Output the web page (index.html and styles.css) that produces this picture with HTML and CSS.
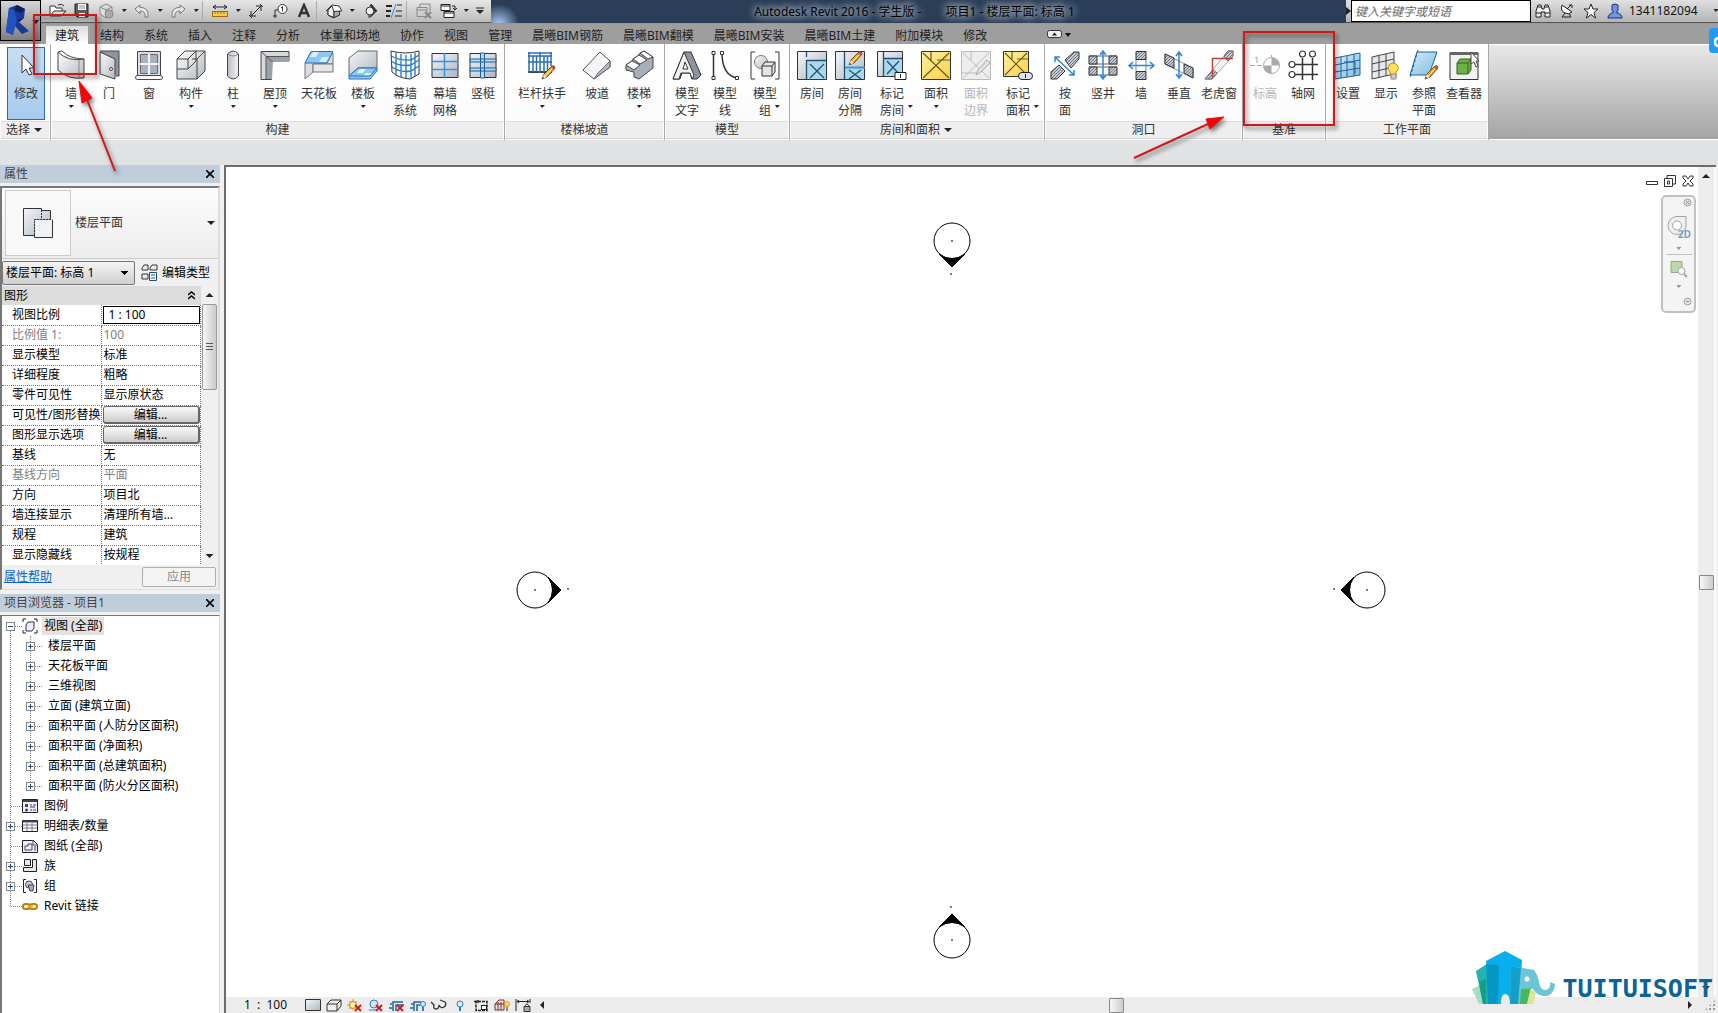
FILE: index.html
```html
<!DOCTYPE html>
<html lang="zh-CN">
<head>
<meta charset="utf-8">
<meta name="viewport" content="width=device-width, initial-scale=1">
<title>Autodesk Revit 2016 - 学生版</title>
<link rel="stylesheet" href="styles.css">
</head>
<body>
<svg class="defs" width="0" height="0" aria-hidden="true">
  <defs>
    <linearGradient id="grey" x1="0" y1="0" x2="1" y2="1"><stop offset="0" stop-color="#fff"/><stop offset="1" stop-color="#b4b8be"/></linearGradient>
    <linearGradient id="dark" x1="0" y1="0" x2="1" y2="0"><stop offset="0" stop-color="#b9bdc4"/><stop offset="1" stop-color="#f2f3f5"/></linearGradient>
    <linearGradient id="slate" x1="0" y1="0" x2="1" y2="1"><stop offset="0" stop-color="#f4f6f9"/><stop offset="1" stop-color="#aeb6c1"/></linearGradient>
    <linearGradient id="blue" x1="0" y1="0" x2="1" y2="1"><stop offset="0" stop-color="#d4ecf8"/><stop offset="1" stop-color="#7fbde0"/></linearGradient>
    <linearGradient id="yellow" x1="0" y1="0" x2="1" y2="1"><stop offset="0" stop-color="#fff0a0"/><stop offset="1" stop-color="#f7cf4a"/></linearGradient>
    <pattern id="hatch" width="3" height="3" patternUnits="userSpaceOnUse"><rect width="3" height="3" fill="#c5cad2"/><path d="M0 3L3 0" stroke="#5b6470" stroke-width=".8"/></pattern>
    <g id="pencil"><path d="M1 14L3 9L11 1Q14 0 14 3L6 12Z" fill="#f3b13c" stroke="#6b3d14"/><path d="M10 2L11 1Q14 0 14 3L13 5Z" fill="#d24a3a"/><path d="M1 14L3 9L6 12Z" fill="#f8e3c0"/><path d="M1 14L2 12L3 13Z" fill="#222"/><path d="M5 10L11 4" stroke="#fff1a8"/></g>
    <g id="redx"><path d="M0 0L6 6M6 0L0 6" stroke="#c8201c" stroke-width="2"/></g>
    <g id="elevation"><circle cx="30" cy="30" r="18" fill="#fff" stroke="#000"/><path d="M17 43L30 56L43 43Q30 52 17 43Z" fill="#000" stroke="#000"/><path d="M29 30h2M28 63h2" stroke="#000"/></g>
  </defs>
</svg>

<header class="head">
  <button class="app" aria-label="应用程序菜单">
    <svg width="38" height="36" viewBox="0 0 38 36"><path d="M7 5L15 2L23 6L22 15L17 19L27 28L20 31L12 22L11 32L4 29Z" fill="#17399a"/><path d="M15 2L23 6L19 10L12 7Z" fill="#0c1f5c"/><path d="M12 7L15 17L11 32L4 29L7 5Z" fill="#2450c0"/><path d="M15 17L22 15L17 19Z" fill="#0c1f5c"/><path d="M30 17h7l-3 4z" fill="#222"/></svg>
  </button>
  <div class="titlebar">
    <div class="qat">
      <button class="q" aria-label="打开"><svg width="18" height="16" viewBox="0 0 18 16"><path d="M1 13V3h5l1 2h6v3" fill="#fff" stroke="#333"/><path d="M1 13L5 8H17L12 13Z" fill="#ddd" stroke="#333"/><path d="M9 2q4-2 6 1" fill="none" stroke="#333"/></svg></button>
      <button class="q" aria-label="保存"><svg width="16" height="16" viewBox="0 0 16 16"><path d="M1 1h13v13H3l-2-2Z" fill="#555c66" stroke="#222"/><path d="M4 1h8v6H4zM5 10h6v4H5z" fill="#fff"/><path d="M5 3h6M5 5h6" stroke="#888"/></svg></button>
      <button class="q" aria-label="同步"><svg width="16" height="16" viewBox="0 0 16 16"><path d="M8 1l6 3v7l-6 4-6-4V4ZM2 4l6 3 6-3M8 7v8" fill="#ddd" stroke="#888"/><circle cx="11" cy="11" r="4" fill="#aaa" stroke="#888"/></svg></button>
      <i class="dd"></i>
      <button class="q" aria-label="撤消"><svg width="16" height="14" viewBox="0 0 16 14"><path d="M1 5L6 1V3.500Q15 3 14 13H11Q12 7 6 7V10Z" fill="#e8e8e8" stroke="#777"/></svg></button>
      <i class="dd"></i>
      <button class="q" aria-label="重做"><svg width="16" height="14" viewBox="0 0 16 14"><path d="M15 5L10 1V3.500Q1 3 2 13H5Q4 7 10 7V10Z" fill="#e8e8e8" stroke="#777"/></svg></button>
      <i class="dd"></i><i class="sep"></i>
      <button class="q" aria-label="测量"><svg width="16" height="14" viewBox="0 0 16 14"><path d="M1 3H15M4 1L1 3L4 5M12 1L15 3L12 5" fill="none" stroke="#222"/><rect x=".5" y="7.500" width="15" height="5" fill="#f7cf4a" stroke="#a06a10"/><path d="M3 8v2M6 8v2M9 8v2M12 8v2" stroke="#a06a10"/></svg></button>
      <i class="dd"></i>
      <button class="q" aria-label="尺寸标注"><svg width="16" height="16" viewBox="0 0 16 16"><path d="M3 13L13 3M8 3h5v5M3 8v5h5M1 12l3 3M12 1l3 3" fill="none" stroke="#222"/></svg></button>
      <button class="q" aria-label="标记"><svg width="16" height="16" viewBox="0 0 16 16"><circle cx="10.500" cy="6" r="4.500" fill="#fff" stroke="#333"/><path d="M10.500 3.500v5M9 5l1.500-1.500M6 7H3v6M1 13h4M3 15v-3" fill="none" stroke="#333"/></svg></button>
      <button class="q" aria-label="文字"><svg width="14" height="16" viewBox="0 0 14 16"><path d="M2 14L7 2L12 14M4 10H10" fill="none" stroke="#333" stroke-width="2.500"/></svg></button>
      <i class="sep"></i>
      <button class="q" aria-label="三维视图"><svg width="16" height="16" viewBox="0 0 16 16"><path d="M0 8L6 2L13 3L16 8H13.500V12L7 15L2 12V7" fill="#fff" stroke="#333"/><path d="M2 7L6 3L8 9V14.500L2 12Z" fill="#eee" stroke="#333"/><path d="M8 8.500L13.500 8V12L8 14.500Z" fill="#aab" stroke="#333"/></svg></button>
      <i class="dd"></i>
      <button class="q" aria-label="剖面"><svg width="14" height="16" viewBox="0 0 14 16"><circle cx="7" cy="8" r="4" fill="#eee" stroke="#333"/><path d="M7 2L13 8L7 14" fill="none" stroke="#333" stroke-width="1.500"/><path d="M8 1L14 8H11ZM6 12v3" fill="#333" stroke="#333"/></svg></button>
      <button class="q" aria-label="细线"><svg width="18" height="16" viewBox="0 0 18 16"><path d="M1 3h6M1 8h5M1 13h4" stroke="#222" stroke-width="2"/><path d="M12 2h5M11 8h6M10 13h7" stroke="#222"/><path d="M11 1L6 15" stroke="#3a8de0"/></svg></button>
      <i class="sep"></i>
      <button class="q" aria-label="关闭隐藏窗口"><svg width="16" height="16" viewBox="0 0 16 16"><path d="M4 4V1h10v7M1 4.500h10v9H1zM1 7h10" fill="none" stroke="#888"/><path d="M9 9l6 6M15 9l-6 6" stroke="#888" stroke-width="2"/></svg></button>
      <button class="q" aria-label="切换窗口"><svg width="18" height="16" viewBox="0 0 18 16"><path d="M2 1.500h9v6H2zM5 8.500h10v6H5z" fill="#fff" stroke="#222"/><path d="M2 3h9M5 10h10M13 3h3v4M14 5l2 2 2-2" fill="none" stroke="#222"/></svg></button>
      <i class="dd"></i>
      <button class="more" aria-label="自定义"><svg width="8" height="8" viewBox="0 0 8 8"><path d="M0 1h8" stroke="#222"/><path d="M0 3h8L4 7z" fill="#222"/></svg></button>
    </div>
    <h1 class="caption"><span>Autodesk Revit 2016 - 学生版 -</span><span>项目1 - 楼层平面: 标高 1</span></h1>
    <div class="infocenter">
      <button class="fold" aria-label="折叠"><svg width="5" height="8" viewBox="0 0 5 8"><path d="M0 0l5 4-5 4z" fill="#222"/></svg></button>
      <input class="search" type="text" aria-label="搜索" placeholder="键入关键字或短语">
      <button class="q" aria-label="搜索"><svg width="16" height="16" viewBox="0 0 16 16"><path d="M1 14V8L3 2h3l1 4h2l1-4h3l2 6v6h-5V9H6v5Z" fill="#eee" stroke="#222"/><path d="M1 10h5M10 10h5M3 4h3M10 4h3" stroke="#222"/></svg></button>
      <button class="q" aria-label="通讯中心"><svg width="16" height="16" viewBox="0 0 16 16"><path d="M3 2Q1 8 6 10Q10 12 13 9Z" fill="#fff" stroke="#222"/><path d="M8 6l4-4M10 2h3v3M6 10l-3 4h9l-2-4" fill="none" stroke="#222"/></svg></button>
      <button class="q" aria-label="收藏夹"><svg width="16" height="16" viewBox="0 0 16 16"><path d="M8 1L10 6H15L11 9.500L12.500 15L8 11.500L3.500 15L5 9.500L1 6H6Z" fill="#fff" stroke="#222"/></svg></button>
      <button class="user"><svg width="16" height="16" viewBox="0 0 16 16"><path d="M5 2Q8 0 11 2V7L9.500 9.500Q15 11 15 15H1Q1 11 6.500 9.500L5 7Z" fill="#6f93e8" stroke="#16337c"/></svg>1341182094</button>
      <i class="dd end"></i>
    </div>
  </div>
  <nav class="tabs" aria-label="功能区">
    <button class="tab on">建筑</button><button class="tab">结构</button><button class="tab">系统</button><button class="tab">插入</button><button class="tab">注释</button><button class="tab">分析</button><button class="tab">体量和场地</button><button class="tab">协作</button><button class="tab">视图</button><button class="tab">管理</button><button class="tab">晨曦BIM钢筋</button><button class="tab">晨曦BIM翻模</button><button class="tab">晨曦BIM安装</button><button class="tab">晨曦BIM土建</button><button class="tab">附加模块</button><button class="tab">修改</button>
    <button class="mini" aria-label="最小化功能区"><svg width="24" height="10" viewBox="0 0 24 10"><rect x=".5" y="1.500" width="14" height="7" rx="2" fill="#eee" stroke="#333"/><path d="M5 6.500h5L7.500 3.500zM18 4h6l-3 4z" fill="#111"/></svg></button>
  </nav>
</header>

<section class="ribbon">
  <div class="panel first">
    <div class="tools"><button class="tool modify"><svg width="30" height="30" viewBox="0 0 30 30"><path d="M11 5V23L15 19L18 25L21 24L18 18H23Z" fill="#fff" stroke="#333"/></svg><span>修改</span></button></div>
    <div class="name">选择<i class="dd big"></i></div>
  </div>
  <div class="panel tight">
    <div class="tools">
      <button class="tool"><svg width="30" height="30" viewBox="0 0 30 30"><path d="M2 2Q12 12 28 9V28Q12 30 2 20Z" fill="url(#grey)" stroke="#444"/><path d="M23 10v19" stroke="#888"/><path d="M2 2L6 1Q14 9 28 9" fill="none" stroke="#444"/></svg><span>墙</span><i class="dd"></i></button>
      <button class="tool"><svg width="30" height="30" viewBox="0 0 30 30"><path d="M6 1H25V26H22" fill="#8e949d" stroke="#444"/><path d="M6 2L21 9V29L6 24Z" fill="url(#grey)" stroke="#444"/><circle cx="17" cy="19" r="1.500" fill="#fff" stroke="#444"/></svg><span>门</span></button>
      <button class="tool w42"><svg width="30" height="30" viewBox="0 0 30 30"><path d="M3.500 1.500h23v24h-23z" fill="#ddd" stroke="#444"/><path d="M6.500 4.500h17v19h-17z" fill="#a9b3c0" stroke="#667"/><path d="M15 4v20M6 14h18" stroke="#f4f4f4" stroke-width="2"/><rect x="1.500" y="25.500" width="27" height="4" rx="2" fill="#fff" stroke="#444"/></svg><span>窗</span></button>
      <button class="tool w42"><svg width="30" height="30" viewBox="0 0 30 30"><path d="M1 9L9 1H29V21L21 29H1Z" fill="url(#grey)" stroke="#444"/><path d="M1 9H12V19H1M12 19L20 11V1M12 9L20 1M16 9H21L29 1M21 9V29" fill="none" stroke="#444"/></svg><span>构件</span><i class="dd"></i></button>
      <button class="tool w42"><svg width="30" height="30" viewBox="0 0 30 30"><path d="M9.500 4Q15-2 20.500 4V26Q15 32 9.500 26Z" fill="url(#dark)" stroke="#444"/><path d="M9.500 4Q15 8 20.500 4" fill="none" stroke="#888"/></svg><span>柱</span><i class="dd"></i></button>
      <button class="tool w42"><svg width="30" height="30" viewBox="0 0 30 30"><path d="M1 1.500H29V11H12L11.500 29.500H1Z" fill="#d6d9de" stroke="#444"/><path d="M1 1.500L6 6.500H29V11H12V29H6V6.500Z" fill="#9aa1ab"/><path d="M1 1.500L12 11.500M6 6.500H29M6 6.500V29" stroke="#555"/></svg><span>屋顶</span><i class="dd"></i></button>
      <button class="tool w46"><svg width="30" height="30" viewBox="0 0 30 30"><path d="M1 13V29L9 22V14H29V3" fill="#d9dce0" stroke="#777"/><path d="M9 14H29V22H9Z" fill="#e4e6e9" stroke="#777"/><path d="M7 1.500H29L23 13H1Z" fill="#8cc6f2" stroke="#2b6fb5"/><path d="M9 2h6l-3 5h-6zM18 7h7l-3 5h-7z" fill="#d9effc"/></svg><span>天花板</span></button>
      <button class="tool w42"><svg width="30" height="30" viewBox="0 0 30 30"><path d="M10 1H29V18H10L1 26V8Z" fill="url(#slate)" stroke="#666"/><path d="M10 18H29V21L22 29H1V26Z" fill="#8cc6f2" stroke="#2b6fb5"/><path d="M12 19h6l-3 4h-6zM18 23h6l-3 3h-6z" fill="#e2f3fd"/><path d="M1 26H22L29 18" fill="none" stroke="#2b6fb5"/></svg><span>楼板</span><i class="dd"></i></button>
      <button class="tool w42"><svg width="30" height="30" viewBox="0 0 30 30"><path d="M1 1Q16 5 29 1V24L20 29Q8 28 2 22Z" fill="#fff" stroke="#333"/><path d="M1 6Q10 11 21 10L29 5M1 11Q10 17 21 15L29 10M2 17Q10 23 21 21L29 16M6 3V25M11 4V27M16 5V28M21 4V29M25 3V26" fill="none" stroke="#2d7cc4" stroke-width="1.400"/></svg><span>幕墙<br>系统</span></button>
      <button class="tool"><svg width="30" height="30" viewBox="0 0 30 30"><path d="M2 3.500h26v24H2z" fill="url(#slate)" stroke="#333"/><path d="M2 11.500h26M2 19.500h26M14.500 3v25" stroke="#3a92e0" stroke-width="1.500"/></svg><span>幕墙<br>网格</span></button>
      <button class="tool"><svg width="30" height="30" viewBox="0 0 30 30"><path d="M2 3.500h26v24H2z" fill="url(#slate)" stroke="#333"/><path d="M2 9h26v3H2zM2 18h26v3H2zM12.500 3h4v25h-4z" fill="#aedcf8" stroke="#1d5c94"/></svg><span>竖梃</span></button>
    </div>
    <div class="name">构建</div>
  </div>
  <div class="panel tight">
    <div class="tools">
      <button class="tool w72"><svg width="30" height="30" viewBox="0 0 30 30"><path d="M1 3h24M1 6h24M1 12h24" stroke="#2b6fb5" stroke-width="1.500"/><path d="M1 22h24" stroke="#444" stroke-width="2"/><path d="M2 2v21M6 6v16M9.500 6v16M13 2v21M17 6v16M20.500 6v16M24 2v14" stroke="#2b6fb5" stroke-width="1.500"/><use href="#pencil" x="14" y="15"/></svg><span>栏杆扶手</span><i class="dd"></i></button>
      <button class="tool"><svg width="30" height="30" viewBox="0 0 30 30"><path d="M1 20L18 2L28 11V17L12 29Z" fill="#fff" stroke="#444"/><path d="M12 29L16 23L28 11V17Z" fill="#b3b9c4" stroke="#666"/><path d="M2 20L18 3L20 14L12 28Z" fill="#f4f5f7"/></svg><span>坡道</span></button>
      <button class="tool w46"><svg width="30" height="30" viewBox="0 0 30 30"><path d="M2 15L8 11L9 9L15 5L16 3L20 1L29 7V18L15 29L10 27V22L2 20Z" fill="#a9afb8" stroke="#444"/><path d="M2 15L8 11L16 15L10 20ZM9 9L15 5L23 10L16 14ZM16 3L20 1L29 7L24 9Z" fill="#fff" stroke="#444"/></svg><span>楼梯</span><i class="dd"></i></button>
    </div>
    <div class="name">楼梯坡道</div>
  </div>
  <div class="panel">
    <div class="tools">
      <button class="tool"><svg width="30" height="30" viewBox="0 0 30 30"><path d="M1 29L12 2H19L29 25L25 29H20L18 23H10L8 29Z" fill="#8d949e" stroke="#333"/><path d="M1 29L12 2L22 25L20 29L18 23H9L7 29Z" fill="#eef0f3" stroke="#333"/><path d="M11 19L13 12L16 19Z" fill="#fff" stroke="#333"/></svg><span>模型<br>文字</span></button>
      <button class="tool"><svg width="30" height="30" viewBox="0 0 30 30"><path d="M3.500 3V28M12 3Q12 25 27 28" fill="none" stroke="#333" stroke-width="1.500"/><path d="M2 1.500h3v3H2zM2 26.500h3v3H2zM10.500 1.500h3v3h-3zM25.500 26.500h3v3h-3z" fill="#fff" stroke="#333"/></svg><span>模型<br>线</span></button>
      <button class="tool w42"><svg width="30" height="30" viewBox="0 0 30 30"><path d="M5 2H1V29H5M25 2H29V29H25" fill="none" stroke="#333"/><circle cx="11" cy="12" r="6.500" fill="url(#grey)" stroke="#777"/><path d="M12 16L15 12H25V22L22 26H12Z" fill="#e2e5ea" stroke="#333"/><path d="M12 16H22V26M22 16L25 12" fill="none" stroke="#333"/></svg><span>模型<br>组<i class="dd side"></i></span></button>
    </div>
    <div class="name">模型</div>
  </div>
  <div class="panel">
    <div class="tools">
      <button class="tool"><svg width="30" height="30" viewBox="0 0 30 30"><path d="M.5 1.500h29v28H.5z" fill="url(#slate)" stroke="#333"/><path d="M10 10h19v19H10z" fill="#a9d8ee"/><path d="M9.500 2v5M9.500 10v19M9.500 10.500H30M13 14L27 28M27 14L13 28" fill="none" stroke="#24506e" stroke-width="1.300"/></svg><span>房间</span></button>
      <button class="tool"><svg width="30" height="30" viewBox="0 0 30 30"><path d="M.5 1.500h29v28H.5z" fill="url(#slate)" stroke="#333"/><path d="M10 18h19v11H10z" fill="#a9d8ee"/><path d="M9.500 2v27M14 20L26 29M26 20L14 29" stroke="#24506e" stroke-width="1.300"/><path d="M10 17.500H30" stroke="#3a92e0" stroke-width="2"/><use href="#pencil" x="13" y="1"/></svg><span>房间<br>分隔</span></button>
      <button class="tool w46"><svg width="30" height="30" viewBox="0 0 30 30"><path d="M.5 1.500h25v25H.5z" fill="url(#slate)" stroke="#333"/><path d="M7 8h18v18H7z" fill="#a9d8ee"/><path d="M6.500 2v24M6.500 8.500H25M10 11L22 24M22 11L10 24" stroke="#24506e" stroke-width="1.300"/><path d="M18 22.500h11v7H18z" fill="#fff" stroke="#222"/><path d="M23.500 24v4" stroke="#222"/></svg><span>标记<br>房间<i class="dd side"></i></span></button>
      <button class="tool w42"><svg width="30" height="30" viewBox="0 0 30 30"><path d="M.5 1.500h29v28H.5z" fill="url(#yellow)" stroke="#333"/><path d="M2 3L28 28M28 3L2 28M10 2v8M16 10h13" stroke="#6b5a1c" stroke-width="1.200"/></svg><span>面积</span><i class="dd"></i></button>
      <button class="tool off" disabled><svg width="30" height="30" viewBox="0 0 30 30"><path d="M.5 1.500h29v28H.5z" fill="#ededed" stroke="#bbb"/><path d="M2 3L28 28M28 3L2 28M10 2v8M1 23h16" stroke="#bbb"/><path d="M15 25l2-5L26 10l3 3-9 9z" fill="#e2e2e2" stroke="#aaa"/></svg><span>面积<br>边界</span></button>
      <button class="tool w46"><svg width="30" height="30" viewBox="0 0 30 30"><path d="M.5 1.500h25v25H.5z" fill="url(#yellow)" stroke="#333"/><path d="M2 3L24 25M24 3L2 25M9 2v7M14 9h11" stroke="#6b5a1c" stroke-width="1.200"/><rect x="15.500" y="22.500" width="14" height="7" rx="3.500" fill="#dfe4f2" stroke="#222"/><path d="M22.500 24v4" stroke="#222"/></svg><span>标记<br>面积<i class="dd side"></i></span></button>
    </div>
    <div class="name">房间和面积<i class="dd big"></i></div>
  </div>
  <div class="panel tight">
    <div class="tools">
      <button class="tool"><svg width="30" height="30" viewBox="0 0 30 30"><path d="M15 10L24 2H29V9L21 18ZM1 29V22L9 15L15 21L7 29Z" fill="url(#hatch)" stroke="#333"/><path d="M5 7L24 25M5 12V7H10M24 20V25H19" fill="none" stroke="#2d84dc" stroke-width="1.500"/></svg><span>按<br>面</span></button>
      <button class="tool"><svg width="30" height="30" viewBox="0 0 30 30"><path d="M1 6H29M1 14H29M1 17H29M1 25H29" stroke="#666"/><path d="M1 6h8v8H1zM21 6h8v8h-8zM1 17h8v8H1zM21 17h8v8h-8z" fill="url(#hatch)" stroke="#333"/><path d="M15 1V29M12 5l3-4 3 4M12 25l3 4 3-4" fill="none" stroke="#2d84dc" stroke-width="1.500"/></svg><span>竖井</span></button>
      <button class="tool"><svg width="30" height="30" viewBox="0 0 30 30"><path d="M10 9V21M20 9V21" stroke="#888"/><path d="M10 1.500h10v8H10zM10 21.500h10v8H10z" fill="url(#hatch)" stroke="#333"/><path d="M3 15.500H28M7 12L3 15.500L7 19M24 12L28 15.500L24 19" fill="none" stroke="#2d84dc" stroke-width="1.500"/></svg><span>墙</span></button>
      <button class="tool"><svg width="30" height="30" viewBox="0 0 30 30"><path d="M1 4L29 18V28L1 14Z" fill="#fff" stroke="#888"/><path d="M1 4L10 8V18L1 14ZM20 14L29 18V28L20 23Z" fill="url(#hatch)" stroke="#333"/><path d="M15 2V28M12 6l3-4 3 4M12 24l3 4 3-4" fill="none" stroke="#2d84dc" stroke-width="1.500"/></svg><span>垂直</span></button>
      <button class="tool w42"><svg width="30" height="30" viewBox="0 0 30 30"><path d="M1 29L24 1H29V6L8 29Z" fill="#f4f4f4" stroke="#aaa"/><path d="M1 29L9 20L13 23L8 29ZM20 6L24 1H29V6L24 11Z" fill="url(#hatch)" stroke="#666"/><path d="M8.500 27V8.500H29" fill="none" stroke="#c04034" stroke-width="1.500"/></svg><span>老虎窗</span></button>
    </div>
    <div class="name">洞口</div>
  </div>
  <div class="panel">
    <div class="tools">
      <button class="tool off" disabled><svg width="30" height="30" viewBox="0 0 30 30"><path d="M0 15.500H30M21.500 5V26" stroke="#aaa" stroke-dasharray="5 2"/><circle cx="21.500" cy="15.500" r="8" fill="#fff" stroke="#aaa"/><path d="M21.500 7.500A8 8 0 0 1 29.500 15.500H21.500ZM21.500 23.500A8 8 0 0 1 13.500 15.500H21.500Z" fill="#aaa"/><path d="M5 8l2-1v6" fill="none" stroke="#aaa"/></svg><span>标高</span></button>
      <button class="tool"><svg width="30" height="30" viewBox="0 0 30 30"><path d="M14.500 8V30M24.500 8V30M7 14.500H30M7 24.500H30" stroke="#333" stroke-width="1.500"/><g fill="#fff" stroke="#333" stroke-width="1.200"><circle cx="14.500" cy="4" r="3"/><circle cx="24.500" cy="4" r="3"/><circle cx="4" cy="14.500" r="3"/><circle cx="4" cy="24.500" r="3"/></g></svg><span>轴网</span></button>
    </div>
    <div class="name">基准</div>
  </div>
  <div class="panel">
    <div class="tools">
      <button class="tool"><svg width="30" height="30" viewBox="0 0 30 30"><path d="M2 8L27 3V25L2 29Z" fill="url(#blue)" stroke="#1f62a0"/><path d="M2 15L27 10M2 22L27 18M8 7V28M14 6V27M21 4V26M11 12h11v12" fill="none" stroke="#1f62a0"/></svg><span>设置</span></button>
      <button class="tool"><svg width="30" height="30" viewBox="0 0 30 30"><path d="M1 7L23 2V24L1 29Z" fill="#e6e8ec" stroke="#444"/><path d="M1 14L23 9M1 22L23 17M8 6V27M15 4V26" stroke="#444"/><path d="M19 22Q16 18 18 15Q22 11 26 15Q29 18 25 22V27H20Z" fill="#ffe45a" stroke="#c48a10"/><path d="M20 24h5v5h-5z" fill="#ccc" stroke="#888"/></svg><span>显示</span></button>
      <button class="tool"><svg width="30" height="30" viewBox="0 0 30 30"><path d="M8 2H28L20 25H1Z" fill="url(#blue)" stroke="#1f62a0"/><path d="M9 0L1 28" stroke="#1f62a0" stroke-dasharray="3 2"/><use href="#pencil" x="15" y="15"/></svg><span>参照<br>平面</span></button>
      <button class="tool w42"><svg width="30" height="30" viewBox="0 0 30 30"><path d="M1 2.500h28v27H1z" fill="#f2f2f2" stroke="#333"/><path d="M1 2h28v3H1z" fill="#666"/><path d="M8 13L11 9H22V20L19 24H8Z" fill="#6fb04a" stroke="#2c6414"/><path d="M8 13H19V24M19 13L22 9" fill="none" stroke="#2c6414"/><path d="M22 2V14L25 12L27 17L29 16L27 11H30Z" fill="#fff" stroke="#444"/></svg><span>查看器</span></button>
    </div>
    <div class="name">工作平面</div>
  </div>
  <div class="spare"></div>
</section>
<div class="options"></div>

<main class="work">
  <aside class="side">
    <section class="props">
      <header class="bar"><h2>属性</h2><button aria-label="关闭属性"><svg width="8" height="8" viewBox="0 0 8 8"><path d="M0 0L8 8M8 0L0 8" stroke="#000" stroke-width="1.600"/></svg></button></header>
      <div class="propbody">
        <button class="type"><span class="thumb"><svg width="32" height="32" viewBox="0 0 32 32"><path d="M1.500 1.500h18v2h9v9H12.500v16h-11z" fill="url(#slate)" stroke="#333"/><path d="M12.500 12.500h18v18h-18z" fill="#eef1f5"/><path d="M12.500 28V12.500H30M19.500 3v9" fill="none" stroke="#333" stroke-dasharray="2 1"/><path d="M12.500 28v2.500h18v-18" fill="none" stroke="#333"/></svg></span><span class="typename">楼层平面</span><i class="dd big"></i></button>
        <div class="filter">
          <select aria-label="实例"><option>楼层平面: 标高 1</option></select>
          <button class="edittype"><svg width="17" height="17" viewBox="0 0 17 17"><path d="M1 4l2-3h4v5H1zM9 4l2-3h5v5H9zM1 10h6v5H1z" fill="#e9edf2" stroke="#333"/><path d="M8.500 8.500h7v8h-7z" fill="#fff" stroke="#1f4f8a"/><path d="M10 11h4M10 14h4" stroke="#1f4f8a"/></svg>编辑类型</button>
        </div>
        <div class="grid">
          <div class="gridmain">
            <div class="group">图形<svg width="7" height="9" viewBox="0 0 7 9"><path d="M0 4L3.500 1L7 4M0 8L3.500 5L7 8" fill="none" stroke="#000" stroke-width="1.400"/></svg></div>
            <table>
              <tr><th scope="row"><label for="scale">视图比例</label></th><td><input id="scale" type="text" value="1 : 100"></td></tr>
              <tr class="dim"><th scope="row">比例值 1:</th><td>100</td></tr>
              <tr><th scope="row">显示模型</th><td>标准</td></tr>
              <tr><th scope="row">详细程度</th><td>粗略</td></tr>
              <tr><th scope="row">零件可见性</th><td>显示原状态</td></tr>
              <tr><th scope="row">可见性/图形替换</th><td><button>编辑...</button></td></tr>
              <tr><th scope="row">图形显示选项</th><td><button>编辑...</button></td></tr>
              <tr><th scope="row">基线</th><td>无</td></tr>
              <tr class="dim"><th scope="row">基线方向</th><td>平面</td></tr>
              <tr><th scope="row">方向</th><td>项目北</td></tr>
              <tr><th scope="row">墙连接显示</th><td>清理所有墙...</td></tr>
              <tr><th scope="row">规程</th><td>建筑</td></tr>
              <tr><th scope="row">显示隐藏线</th><td>按规程</td></tr>
            </table>
          </div>
          <div class="vscroll"><i class="up"></i><i class="thumbbar"></i><i class="down"></i></div>
        </div>
        <footer><a href="#help">属性帮助</a><button disabled>应用</button></footer>
      </div>
    </section>
    <section class="browser">
      <header class="bar"><h2>项目浏览器 - 项目1</h2><button aria-label="关闭项目浏览器"><svg width="8" height="8" viewBox="0 0 8 8"><path d="M0 0L8 8M8 0L0 8" stroke="#000" stroke-width="1.600"/></svg></button></header>
      <ul class="tree">
        <li><div class="row"><button class="exp minus" aria-label="折叠"></button><svg width="16" height="16" viewBox="0 0 16 16"><path d="M4 1H1V4M12 1h3v3M1 12v3h3M15 12v3h-3" fill="none" stroke="#222"/><path d="M4 7l2-3h6v6l-2 3H4z" fill="#eef" stroke="#333"/></svg><span class="sel">视图 (全部)</span></div>
          <ul>
            <li class="row"><button class="exp" aria-label="展开"></button><span>楼层平面</span></li>
            <li class="row"><button class="exp" aria-label="展开"></button><span>天花板平面</span></li>
            <li class="row"><button class="exp" aria-label="展开"></button><span>三维视图</span></li>
            <li class="row"><button class="exp" aria-label="展开"></button><span>立面 (建筑立面)</span></li>
            <li class="row"><button class="exp" aria-label="展开"></button><span>面积平面 (人防分区面积)</span></li>
            <li class="row"><button class="exp" aria-label="展开"></button><span>面积平面 (净面积)</span></li>
            <li class="row"><button class="exp" aria-label="展开"></button><span>面积平面 (总建筑面积)</span></li>
            <li class="row"><button class="exp" aria-label="展开"></button><span>面积平面 (防火分区面积)</span></li>
          </ul>
        </li>
        <li class="row leaf"><svg width="16" height="16" viewBox="0 0 16 16"><path d="M.5 1.500h15v13H.5z" fill="#eef" stroke="#222"/><path d="M1 3h14" stroke="#444" stroke-width="2"/><path d="M3 6h3v3H3z" fill="#445"/><circle cx="4.500" cy="12" r="1.500" fill="#445"/><path d="M8 7h2M11 7h3M8 9h5M8 12h2M11 12h3" stroke="#445"/></svg><span>图例</span></li>
        <li class="row"><button class="exp" aria-label="展开"></button><svg width="16" height="16" viewBox="0 0 16 16"><path d="M.5 2.500h15v11H.5z" fill="#fff" stroke="#222"/><path d="M1 3.500h14" stroke="#445" stroke-width="2"/><path d="M1 7h14M1 10h14M5 5v8M10 5v8" stroke="#778"/></svg><span>明细表/数量</span></li>
        <li class="row leaf"><svg width="16" height="16" viewBox="0 0 16 16"><path d="M.5 2.500h11l4 4v8H.5z" fill="#eef" stroke="#222"/><path d="M11 2v5h5M3 12V8h3V6h4v6zM13 8v5" fill="none" stroke="#445"/></svg><span>图纸 (全部)</span></li>
        <li class="row"><button class="exp" aria-label="展开"></button><svg width="16" height="16" viewBox="0 0 16 16"><path d="M2.500 1.500h6v6h-6zM10.500 1.500h4v12h-13v-4h9z" fill="#e6e8f0" stroke="#222"/></svg><span>族</span></li>
        <li class="row"><button class="exp" aria-label="展开"></button><svg width="16" height="16" viewBox="0 0 16 16"><path d="M4 1.500H1.500v13H4M12 1.500h2.500v13H12" fill="none" stroke="#222"/><circle cx="7" cy="6.500" r="3.500" fill="#ccd" stroke="#445"/><path d="M6 7h6l-1 6H8z" fill="#aab" stroke="#445"/></svg><span>组</span></li>
        <li class="row leaf"><svg width="16" height="16" viewBox="0 0 16 16"><g fill="none" stroke="#b88208" stroke-width="2"><rect x="1" y="6" width="7" height="5" rx="2.500"/><rect x="8" y="6" width="7" height="5" rx="2.500"/><path d="M5 8.500h6" stroke="#e8b422"/></g></svg><span>Revit 链接</span></li>
      </ul>
    </section>
  </aside>

  <section class="view">
    <div class="canvas">
      <svg class="mark top" width="60" height="70" viewBox="0 0 60 70"><use href="#elevation"/></svg>
      <svg class="mark left" width="70" height="60" viewBox="0 0 70 60"><use href="#elevation" transform="matrix(0 1 1 0 0 0)"/></svg>
      <svg class="mark right" width="70" height="60" viewBox="0 0 70 60"><use href="#elevation" transform="matrix(0 1 -1 0 70 0)"/></svg>
      <svg class="mark bottom" width="60" height="70" viewBox="0 0 60 70"><use href="#elevation" transform="matrix(1 0 0 -1 0 70)"/></svg>
      <div class="winbtns">
        <button aria-label="最小化"><svg width="12" height="12" viewBox="0 0 12 12"><path d="M.5 6.500h11v3H.5z" fill="#fff" stroke="#333"/></svg></button>
        <button aria-label="还原"><svg width="12" height="12" viewBox="0 0 12 12"><path d="M3 3V.500h8.500V9H9" fill="none" stroke="#333"/><path d="M.5 3.500h8v8h-8zM3.500 6h2v3h-2z" fill="#fff" stroke="#333"/></svg></button>
        <button aria-label="关闭"><svg width="12" height="12" viewBox="0 0 12 12"><path d="M1 1h3l2 3 2-3h3v2L8 6l3 3v2H8L6 8l-2 3H1V9l3-3-3-3z" fill="#fff" stroke="#333"/></svg></button>
      </div>
      <div class="navbar">
        <svg class="tiny" width="9" height="9" viewBox="0 0 9 9"><circle cx="4.500" cy="4.500" r="3.500" fill="#ddd" stroke="#999"/><path d="M3 3l3 3M6 3L3 6" stroke="#888"/></svg>
        <button aria-label="二维控制盘"><svg width="26" height="26" viewBox="0 0 26 26"><path d="M11 2.500H20V12A9 9 0 1 1 11 2.500Z" fill="#eceef1" stroke="#999"/><circle cx="11" cy="11.500" r="4.500" fill="#fff" stroke="#999"/><text x="12" y="24" font-size="10" font-weight="bold" fill="#6f90bd">2D</text></svg></button>
        <i class="dd"></i><hr>
        <button aria-label="区域放大"><svg width="18" height="18" viewBox="0 0 18 18"><path d="M1 1.500h11v11H1z" fill="#b5d5a0" stroke="#8aa07c"/><circle cx="11.500" cy="11" r="3.500" fill="#fff" stroke="#999"/><path d="M14 14l3 3" stroke="#999" stroke-width="2"/></svg></button>
        <i class="dd"></i>
        <svg class="tiny" width="9" height="9" viewBox="0 0 9 9"><circle cx="4.500" cy="4.500" r="3.500" fill="#ddd" stroke="#999"/><path d="M3 4.500h3" stroke="#888"/></svg>
      </div>
    </div>
    <div class="vs"><i class="up"></i><i class="knob"></i><i class="down"></i></div>
    <div class="status">
      <button class="scale">1  :  100</button>
      <div class="vicons">
        <svg width="16" height="13" viewBox="0 0 16 13"><path d="M.5 .500h15v11H.5z" fill="url(#slate)" stroke="#333"/></svg>
        <svg width="16" height="13" viewBox="0 0 16 13"><path d="M1 5l4-4h10v6l-4 5H1zM1 5h10v7M11 5l4-4" fill="#eee" stroke="#333"/></svg>
        <svg width="16" height="13" viewBox="0 0 16 13"><circle cx="6" cy="6" r="3.500" fill="#fff2b0" stroke="#e09a1a" stroke-width="1.500"/><path d="M6 0v2M0 6h2M2 2l1 1M10 2L9 3M2 10l1-1" stroke="#e09a1a"/><use href="#redx" x="8" y="6"/></svg>
        <svg width="16" height="13" viewBox="0 0 16 13"><circle cx="6" cy="5" r="4" fill="#cfe6fa" stroke="#2d7cc4"/><path d="M1 11h7" stroke="#2d7cc4"/><use href="#redx" x="8" y="6"/></svg>
        <svg width="16" height="13" viewBox="0 0 16 13"><path d="M0 9h3M4 12V3h10M7 12V6h8M1 5h2" fill="none" stroke="#1f62a0" stroke-width="1.500"/><use href="#redx" x="8" y="6"/></svg>
        <svg width="16" height="13" viewBox="0 0 16 13"><path d="M0 9h3M4 12V3h7M7 12V6h3M1 5h2" fill="none" stroke="#1f62a0" stroke-width="1.500"/><circle cx="13" cy="5" r="2.500" fill="#d8ecfc" stroke="#2d7cc4"/><path d="M13 8v4" stroke="#2d7cc4" stroke-width="2"/></svg>
        <svg width="16" height="13" viewBox="0 0 16 13"><path d="M0 3l3 3q-1 4 2 4t3-4q2 4 5 2t1-5L9 1" fill="none" stroke="#333" stroke-width="1.300"/></svg>
        <svg width="16" height="13" viewBox="0 0 16 13"><circle cx="8" cy="5" r="3" fill="#d8ecfc" stroke="#2d7cc4"/><path d="M8 8v4" stroke="#2d7cc4" stroke-width="2"/></svg>
        <svg width="16" height="13" viewBox="0 0 16 13"><path d="M1 2.500h13v9H3V1M5 1v3" fill="none" stroke="#222" stroke-dasharray="3 1" stroke-width="1.500"/><rect x="8.500" y="6.500" width="5" height="4" fill="#fff" stroke="#222"/></svg>
        <svg width="16" height="13" viewBox="0 0 16 13"><path d="M1 5l4-4h5v10H1zM1 5h9M4 3v8M7 3v8" fill="#e8e8e8" stroke="#7c2a24"/><circle cx="13" cy="5" r="2.500" fill="#ffd95a" stroke="#e09a1a"/><path d="M13 8v4" stroke="#888" stroke-width="2"/></svg>
        <svg width="16" height="13" viewBox="0 0 16 13"><path d="M1 0v12M15 0v4M2 2.500h12M4 1L2 2.500 4 4M12 1l2 1.500L12 4" fill="none" stroke="#222"/><path d="M9 7.500h6v5H9z" fill="#aaa" stroke="#333"/><path d="M10 7q2-4 4 0" fill="none" stroke="#333"/></svg>
      </div>
      <div class="hs"><i class="lt"></i><i class="knob"></i><i class="rt"></i></div>
      <i class="grip"></i>
    </div>
  </section>
</main>

<div class="brand">
  <svg width="84" height="54" viewBox="0 0 84 54"><path d="M0 38L8 34L14 53H7Z" fill="#a8dcc4"/><path d="M4 20L15 13L27 14V53H11Z" fill="#22b3ae"/><path d="M7 31L14 28V53H11Z" fill="#139e8a"/><path d="M14 10L33 0L50 9L48 53H38Q38 43 33 43Q29 43 29 53H17Z" fill="#08aeee"/><path d="M14 13L27 14L26 53H16Z" fill="#0399c4"/><path d="M39 15L62 19Q66 24 68 35Q71 41 76 38Q79 36 78 31L83 33Q82 46 71 45Q65 44 61 38L55 37L49 53H38Z" fill="#6cc5d6"/><path d="M39 15L49 17L46 53H38Z" fill="#10a0c8"/><path d="M49 38L59 37L55 53H48Z" fill="#45b763"/><path d="M59 38L64 41L61 53H55Z" fill="#d7e88c"/><circle cx="55" cy="28" r="2.500" fill="#fff"/></svg>
  <strong>TUITUISOFT</strong>
</div>
<div class="dock"><svg width="9" height="25" viewBox="0 0 9 25"><path d="M10 10Q6 10 6 14T10 18" fill="none" stroke="#fff" stroke-width="2.500"/></svg></div>
<svg class="notes" width="1360" height="180" viewBox="0 0 1360 180" aria-hidden="true">
  <g fill="none" stroke="#d01818" stroke-width="2"><rect x="34" y="15" width="62" height="59"/><rect x="1244" y="32" width="90" height="93"/><path d="M115 171L86 97M1134 158L1208 124"/></g>
  <path d="M79 81L92 98L82 103ZM1224 117L1206 119L1210 129Z" fill="#f00" stroke="#d01818"/>
</svg>
</body>
</html>
```
FILE: styles.css
```css
* { box-sizing: border-box; }
body {
  margin: 0;
  height: 100vh;
  display: flex;
  flex-direction: column;
  overflow: hidden;
  position: relative;
  background: #f0f0f0;
  color: #111;
  font: 12px/16px "Noto Sans", "Noto Sans CJK SC", sans-serif;
}
.defs { position: absolute; }
button {
  font: inherit;
  color: inherit;
  background: none;
  border: 0;
  padding: 0;
  margin: 0;
}
svg { display: block; flex: none; }
h1, h2 { margin: 0; font: inherit; }
ul { list-style: none; margin: 0; padding: 0; }

/* small drop-down triangle */
.dd {
  flex: none;
  width: 12px;
  height: 4px;
  background: #222;
  clip-path: polygon(4px 0, 9px 0, 6px 3px);
}
.dd.big { clip-path: polygon(2px 0, 10px 0, 6px 4px); }

/* title bar and tabs */
.head {
  display: grid;
  grid-template: 24px 20px / 41px minmax(0, 1fr);
  background: #9e9e9e;
  flex: none;
}
.app {
  grid-row: span 2;
  height: 41px;
  border: 1px solid #000;
  background: linear-gradient(#d6d6d6, #7e7e7e);
  display: grid;
  place-items: center;
}
.titlebar { display: flex; background: #2b3e57; border-bottom: 1px solid #999; }
.qat {
  display: flex;
  align-items: center;
  padding-left: 5px;
  width: 450px;
  background: linear-gradient(#e6e6e6, #bcbcbc);
  border-bottom: 1px solid #555;
}
.q { width: 24px; display: grid; place-items: center; flex: none; }
.more { padding-left: 4px; }
.sep { width: 6px; height: 20px; border-left: 1px solid #aaa; border-right: 4px solid transparent; }
.caption {
  flex: 1;
  display: flex;
  align-items: center;
  justify-content: center;
  gap: 24px;
  padding-right: 8px;
  white-space: pre;
  font-size: 12px;
  color: #000;
  text-shadow: 0 0 8px #c8d2dc, 0 0 6px #9aa8b8, 0 0 10px #9aa8b8;
  background: radial-gradient(ellipse 20px 20px at 8px 24px, #a9cbf0, #2b3e57);
}
.infocenter {
  width: 372px;
  flex: none;
  display: flex;
  align-items: center;
  overflow: hidden;
  background: linear-gradient(#e0e0e0, #b4b4b4);
  border-bottom: 1px solid #555;
}
.fold { width: 14px; height: 22px; display: grid; place-items: center; }
.search {
  width: 180px;
  height: 22px;
  flex: none;
  border: 1px solid #000;
  padding: 0 3px;
  font: italic 12px/16px "Noto Sans", "Noto Sans CJK SC", sans-serif;
}
.search::placeholder { color: #666; }
.user { display: flex; align-items: center; gap: 6px; padding-left: 4px; }
.dd.end { margin-left: 12px; }
.tabs { display: flex; align-items: stretch; padding-left: 5px; }
.tab { padding: 3px 10px 0; white-space: nowrap; color: #222; }
.tab.on {
  margin-top: 2px;
  padding: 1px 9px 0;
  background: linear-gradient(#dcdcdc, #fff);
  width: 42px;
  margin-right: 2px;
}
.mini { margin-left: 50px; }

/* ribbon */
.ribbon { display: flex; height: 96px; flex: none; background: #fff; }
.panel {
  flex: none;
  display: flex;
  flex-direction: column;
  border-right: 1px solid #a8a8a8;
  background: linear-gradient(#fff, #fbfbfb);
}
.tools { flex: 1; display: flex; padding: 2px 3px 0; }
.tight .tools { padding: 2px 2px 0 1px; }
.first .tools { padding: 2px 5px 0 7px; }
.name {
  height: 18px;
  margin: 0 1px 1px;
  background: #eee;
  border-top: 1px solid #ddd;
  border-bottom: 1px solid #d4d4d4;
  display: flex;
  align-items: center;
  justify-content: center;
  gap: 2px;
  color: #333;
}
.tool {
  width: 38px;
  padding-top: 4px;
  display: flex;
  flex-direction: column;
  align-items: center;
  color: #333;
  line-height: 17px;
  white-space: nowrap;
}
.tool span { margin-top: 5px; }
.tool > .dd { margin-top: 3px; }
.w42 { width: 42px; }
.w46 { width: 46px; }
.w72 { width: 72px; }
.off { color: #b4b4b4; }
.modify { height: 73px; margin-top: 1px; padding-top: 2px; background: linear-gradient(#c8ddf2, #a5cbee); border: 1px solid #2c6ca8; }
.side.dd { display: inline-block; margin-right: -12px; vertical-align: 6px; width: 12px; }
.spare { flex: 1; margin: 1px 0 1px; background: linear-gradient(#e8e8e8, #a4a4a4); }
.options { height: 25px; flex: none; background: #e0e2e4; }

/* docked palettes */
.work { flex: 1; min-height: 0; display: flex; }
aside.side { width: 224px; flex: none; padding-right: 4px; display: flex; flex-direction: column; }
.bar {
  height: 18px;
  padding: 0 6px 0 4px;
  background: #c0cddb;
  color: #444;
  display: flex;
  align-items: center;
  justify-content: space-between;
}
.props { flex: none; }
.propbody { margin-top: 3px; height: 404px; border: 1px solid #aaa; border-width: 2px 2px 1px 2px; border-color: #777 #ddd #ddd #777; display: flex; flex-direction: column; }
.type {
  height: 71px;
  display: flex;
  align-items: center;
  padding: 0 1px 0 3px;
  background: linear-gradient(#fcfcfc, #ececec);
  border-bottom: 1px solid #ccc;
  color: #333;
}
.thumb { width: 66px; height: 66px; border: 1px solid #ccc; display: grid; place-items: center; background: #f8f8f8; }
.typename { flex: 1; text-align: left; padding-left: 4px; }
.filter { display: flex; height: 27px; align-items: center; }
.filter select {
  appearance: none;
  width: 133px;
  height: 24px;
  border: 1px solid #777;
  border-radius: 2px;
  padding: 0 3px;
  font: inherit;
  color: #000;
  background:
    conic-gradient(from 315deg at 50% 100%, #000 90deg, transparent 0) right 6px center / 7px 4px no-repeat,
    linear-gradient(#f4f4f4, #d0d0d0);
}
.edittype { display: flex; align-items: center; gap: 4px; padding-left: 6px; color: #000; }
.grid { flex: 1; display: flex; min-height: 0; }
.gridmain { flex: 1; background: #fff; overflow: hidden; color: #000; }
.group { height: 19px; background: #dcdcdc; display: flex; align-items: center; justify-content: space-between; padding: 0 6px 0 2px; }
table { width: 100%; border-collapse: collapse; table-layout: fixed; }
tr { height: 20px; }
th, td { padding: 0; height: 20px; border-bottom: 1px dotted #777; border-right: 1px dotted #777; font-weight: 400; text-align: left; white-space: nowrap; }
th { width: 99px; padding-left: 10px; }
td { padding-left: 2px; }
td:has(input), td:has(button) { padding-left: 1px; }
td input, td button { display: block; width: 97px; height: 18px; font: inherit; color: #000; }
td input { border: 1px solid #000; padding: 0 5px; }
td button { border: 1px solid #666; border-width: 1px 2px 2px 1px; border-radius: 3px; line-height: 14px; background: linear-gradient(#fafafa, #cdcdcd); }
.dim { color: #808080; }
.vscroll { width: 17px; background: #f0f0f0; display: flex; flex-direction: column; align-items: center; }
.up, .down { width: 8px; height: 4px; background: #222; clip-path: polygon(50% 0, 100% 100%, 0 100%); flex: none; }
.down { clip-path: polygon(0 0, 100% 0, 50% 100%); margin-top: auto; }
.vscroll .up { margin: 7px 0; }
.vscroll .down { margin-bottom: 7px; }
.thumbbar {
  width: 15px;
  height: 86px;
  border: 1px solid #999;
  border-radius: 2px;
  background:
    repeating-linear-gradient(#555 0 1px, transparent 1px 3px) center / 7px 9px no-repeat,
    linear-gradient(90deg, #f6f6f6, #cacaca);
}
.propbody footer { height: 24px; padding: 0 2px; display: flex; align-items: center; justify-content: space-between; }
.propbody a { color: #0a5fc8; }
.propbody footer button { width: 74px; height: 20px; border: 1px solid #adadad; border-radius: 2px; color: #888; background: #f4f4f4; }
.browser { flex: 1; min-height: 0; margin-top: 4px; display: flex; flex-direction: column; }
.tree {
  flex: 1;
  position: relative;
  margin-top: 3px;
  padding-left: 4px;
  background: #fff;
  border-left: 2px solid #777;
  border-top: 1px solid #777;
  border-right: 1px solid #ddd;
  color: #000;
}
.tree::before { content: ""; position: absolute; left: 8px; top: 10px; height: 280px; border-left: 1px dotted #888; }
.row { display: flex; align-items: center; height: 20px; white-space: nowrap; }
.row::after { content: ""; order: 1; width: 7px; border-top: 1px dotted #888; }
.row > svg { order: 2; }
.row > span { order: 3; margin-left: 4px; padding: 1px 2px; }
.leaf::after { width: 11px; margin-left: 5px; }
.sel { background: #e4e2e0; }
.exp {
  order: 0;
  width: 9px;
  height: 9px;
  border: 1px solid #888;
  position: relative;
  background:
    linear-gradient(#2a4a8a, #2a4a8a) center / 5px 1px no-repeat,
    linear-gradient(#2a4a8a, #2a4a8a) center / 1px 5px no-repeat, #fff;
}
.exp.minus { background: linear-gradient(#2a4a8a, #2a4a8a) center / 5px 1px no-repeat, #fff; }
.tree ul { position: relative; padding-left: 20px; }
.tree ul::before { content: ""; position: absolute; left: 24px; top: 0; height: 150px; border-left: 1px dotted #888; }

/* drawing view */
.view {
  flex: 1;
  min-width: 0;
  margin-right: 2px;
  display: grid;
  grid-template: minmax(0, 1fr) 16px / minmax(0, 1fr) 18px;
  border-top: 2px solid #6c6c6c;
  border-left: 2px solid #6c6c6c;
}
.canvas { position: relative; background: #fff; }
.mark { position: absolute; margin: -30px; }
.top { left: 49.3%; top: 74px; }
.left { left: 21%; top: 51%; }
.right { right: 22.5%; top: 51%; }
.bottom { left: 49.3%; bottom: 57px; }
.winbtns { position: absolute; right: 4px; top: 8px; display: flex; gap: 6px; }
.navbar {
  position: absolute;
  right: 2px;
  top: 28px;
  width: 35px;
  height: 118px;
  border: 2px solid #bbb;
  border-radius: 5px;
  background: #f3f3f3;
  display: flex;
  flex-direction: column;
  align-items: center;
  gap: 7px;
  opacity: .9;
}
.navbar hr { width: 26px; margin: -4px 0 -2px; border: 0; border-top: 1px solid #bbb; }
.navbar .dd { background: #888; }
.tiny { align-self: flex-end; margin: 1px 2px 0; }
.vs { background: #ededed; border-right: 2px solid #fafafa; display: flex; flex-direction: column; align-items: center; justify-content: space-between; padding: 7px 0; }
.vs .down { margin: 0; }
.knob { width: 15px; height: 15px; border: 1px solid #888; border-radius: 1px; background: linear-gradient(90deg, #f8f8f8, #ccc); flex: none; }
.status { grid-column: span 2; display: flex; align-items: center; background: #ececec; }
.scale { width: 79px; text-align: center; white-space: pre; }
.vicons { display: flex; gap: 5px; }
.hs { flex: 1; display: flex; align-items: center; justify-content: space-between; padding: 0 12px 0 9px; }
.lt, .rt { width: 4px; height: 8px; background: #222; clip-path: polygon(0 50%, 100% 0, 100% 100%); }
.rt { clip-path: polygon(0 0, 100% 50%, 0 100%); }
.grip { width: 12px; height: 12px; background: radial-gradient(#999 1px, transparent 1px) 0 0 / 4px 4px; clip-path: polygon(100% 0, 100% 100%, 0 100%); }

/* overlays */
.brand { position: absolute; right: 5px; bottom: 8px; display: flex; align-items: flex-end; gap: 6px; color: #0b6496; }
.brand strong { font: bold 25px/32px "DejaVu Sans Mono", monospace; }
.dock { position: absolute; right: 0; top: 28px; background: #1e9bf5; border-radius: 4px 0 0 4px; }
.notes { position: absolute; left: 0; top: 0; pointer-events: none; filter: drop-shadow(2px 3px 2px rgba(0, 0, 0, .5)); }
```
